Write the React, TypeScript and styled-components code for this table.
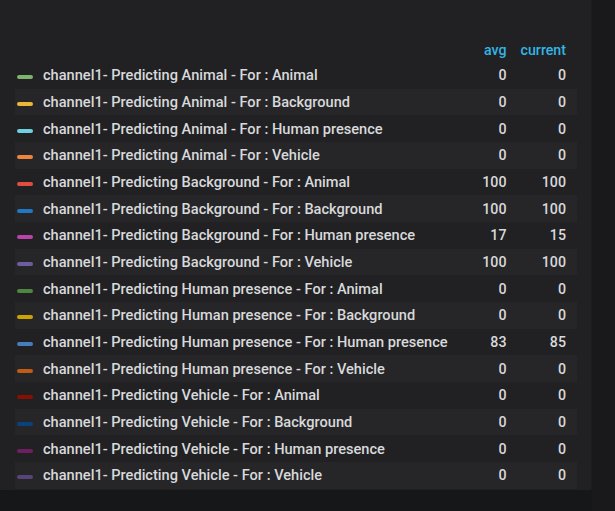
import React from "react";
import styled, { createGlobalStyle } from "styled-components";

const Global = createGlobalStyle`
  html, body { margin: 0; padding: 0; background: #161719; }
  body { font-family: Roboto, "Noto Sans", sans-serif; }
`;

const Page = styled.div`
  width: 615px;
  height: 511px;
  background: #161719;
  display: flex;
  align-items: flex-start;
`;

const Panel = styled.div`
  width: 592px;
  height: 490px;
  background: #212124;
  box-sizing: border-box;
  padding: 38px 0 0 15px;
  border-right: 1px solid #1c1c1f;
`;

const Side = styled.div`
  width: 23px;
  height: 511px;
  background: #19191b;
`;

const Table = styled.table`
  border-collapse: collapse;
  width: 562px;
  font-size: 14.2px;
  font-weight: 500;
  color: #d8d9da;
`;

const HeadCell = styled.th<{ $pad?: number }>`
  color: #33b5e5;
  font-weight: 500;
  text-align: right;
  height: 24px;
  padding: 0 ${(p) => p.$pad ?? 0}px 0 0;
  vertical-align: middle;
`;

const Row = styled.tr<{ $alt: boolean }>`
  height: 26.67px;
  background: ${(p) => (p.$alt ? "#262629" : "transparent")};
`;

const NameCell = styled.td`
  padding: 0 0 0 2px;
  white-space: nowrap;
  text-align: left;
  font-size: 14.6px;
`;

const ValCell = styled.td<{ $pad?: number }>`
  text-align: right;
  padding: 0 ${(p) => p.$pad ?? 0}px 0 0;
  width: 60px;
`;

const Swatch = styled.span<{ $c: string }>`
  display: inline-block;
  width: 16px;
  height: 4px;
  border-radius: 2px;
  background: ${(p) => p.$c};
  vertical-align: middle;
  margin-right: 10px;
  position: relative;
  top: 1px;
`;

const rows: [string, string, number, number][] = [
  ["#7eb26d", "channel1- Predicting Animal - For : Animal", 0, 0],
  ["#eab839", "channel1- Predicting Animal - For : Background", 0, 0],
  ["#6ed0e0", "channel1- Predicting Animal - For : Human presence", 0, 0],
  ["#ef843c", "channel1- Predicting Animal - For : Vehicle", 0, 0],
  ["#e24d42", "channel1- Predicting Background - For : Animal", 100, 100],
  ["#1f78c1", "channel1- Predicting Background - For : Background", 100, 100],
  ["#ba43a9", "channel1- Predicting Background - For : Human presence", 17, 15],
  ["#705da0", "channel1- Predicting Background - For : Vehicle", 100, 100],
  ["#508642", "channel1- Predicting Human presence - For : Animal", 0, 0],
  ["#cca300", "channel1- Predicting Human presence - For : Background", 0, 0],
  ["#447ebc", "channel1- Predicting Human presence - For : Human presence", 83, 85],
  ["#c15c17", "channel1- Predicting Human presence - For : Vehicle", 0, 0],
  ["#890f02", "channel1- Predicting Vehicle - For : Animal", 0, 0],
  ["#0a437c", "channel1- Predicting Vehicle - For : Background", 0, 0],
  ["#6d1f62", "channel1- Predicting Vehicle - For : Human presence", 0, 0],
  ["#584477", "channel1- Predicting Vehicle - For : Vehicle", 0, 0],
];

export default function App() {
  return (
    <>
      <Global />
      <Page>
        <Panel>
          <Table>
            <thead>
              <tr>
                <HeadCell />
                <HeadCell>avg</HeadCell>
                <HeadCell $pad={11}>current</HeadCell>
              </tr>
            </thead>
            <tbody>
              {rows.map(([c, name, avg, cur], i) => (
                <Row key={name} $alt={i % 2 === 1}>
                  <NameCell>
                    <Swatch $c={c} />
                    {name}
                  </NameCell>
                  <ValCell>{avg}</ValCell>
                  <ValCell $pad={11}>{cur}</ValCell>
                </Row>
              ))}
            </tbody>
          </Table>
        </Panel>
        <Side />
      </Page>
    </>
  );
}
